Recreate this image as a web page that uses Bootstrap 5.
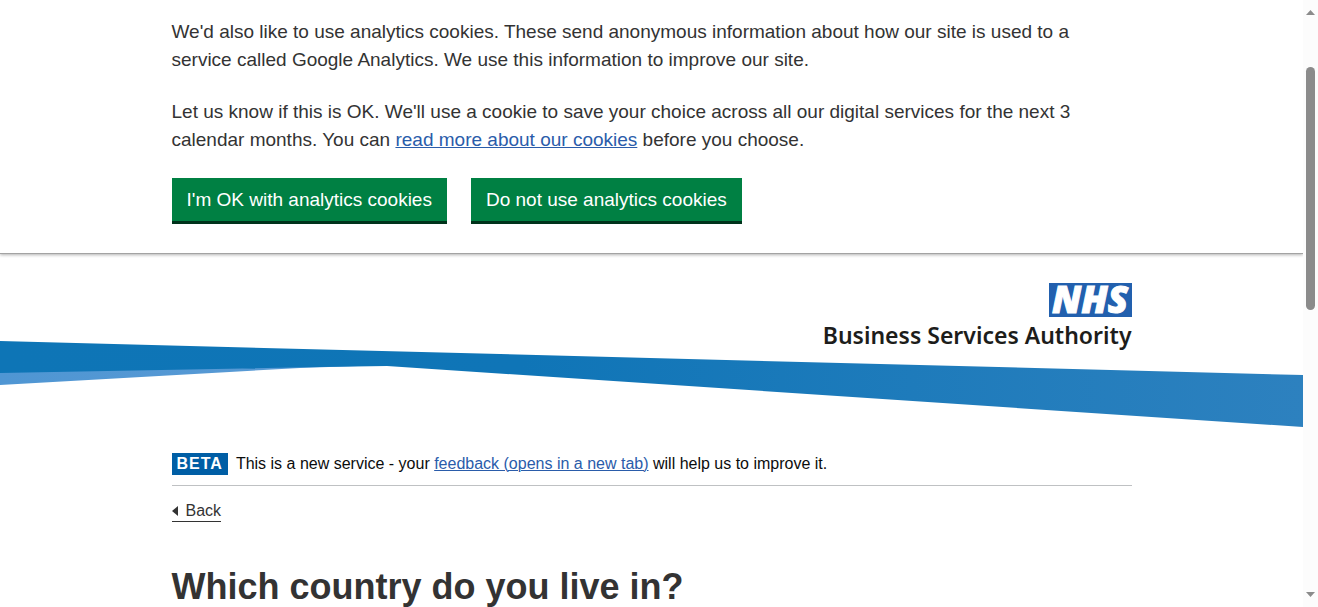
<!DOCTYPE html>
<html lang="en">
<head>
<meta charset="utf-8">
<meta name="viewport" content="width=device-width, initial-scale=1">
<title>Which country do you live in?</title>
<link href="https://cdn.jsdelivr.net/npm/bootstrap@5.3.0/dist/css/bootstrap.min.css" rel="stylesheet">
<style>
  body { font-family: "Liberation Sans", Arial, sans-serif; color: #333; background: #fff; }
  .viewport { height: 100vh; overflow: hidden; }
  .page-width { max-width: 960px; margin: 0 auto; }
  a { color: #2a5caa; text-decoration-thickness: 1px; }

  .cookie-banner { padding: 18px 0 29px; border-bottom: 1px solid #a3a3a3; box-shadow: 0 1px 3px rgba(0,0,0,.3); font-size: 19px; line-height: 28px; }
  .cookie-copy { padding-right: 24px; }
  .cookie-copy p { margin-bottom: 24px; }
  .btn-cookie { --bs-btn-color: #fff; --bs-btn-bg: #008043; --bs-btn-hover-color: #fff; --bs-btn-hover-bg: #00693a; --bs-btn-active-bg: #00693a; --bs-btn-active-color: #fff;
    font-size: 19px; line-height: 27px; padding: 8px 15px; border: 0; border-radius: 0; border-bottom: 3px solid #00331b; }

  .brand-row { padding-top: 29px; }
  .nhs-mark { width: 83px; height: 34px; }
  .brand-name { font: 600 23px/36px "Noto Sans", "Open Sans", sans-serif; color: #1d1d1b; }
  .ribbon { height: 88px; margin-top: -13px; }

  .phase-banner { margin-top: 25px; padding-bottom: 10px; border-bottom: 1px solid #bfc1c3; font-size: 16px; line-height: 22px; color: #0b0c0c; }
  .phase-tag { background: #005ea5; color: #fff; font-weight: 700; letter-spacing: 1px; padding: 0 5px; }
  .back-link { margin-top: 14px; color: #333; font-size: 16px; line-height: 21px; border-bottom: 1px solid #333; }
  h1 { margin: 39px 0 0; font-size: 36px; line-height: 50px; font-weight: 700; }

  .scroll-rail { width: 15px; background: #fcfcfc; padding: 10px 0; }
  .scroll-thumb { width: 9px; height: 243px; margin-top: 52px; border-radius: 5px; background: #8b8b8b; }
</style>
</head>
<body>
<div class="viewport d-flex">
  <div class="flex-grow-1 overflow-hidden">
    <section class="cookie-banner" aria-label="Cookies">
      <div class="page-width">
        <div class="cookie-copy">
          <p>We'd also like to use analytics cookies. These send anonymous information about how our site is used to a service called Google Analytics. We use this information to improve our site.</p>
          <p>Let us know if this is OK. We'll use a cookie to save your choice across all our digital services for the next 3 calendar months. You can <a href="#">read more about our cookies</a> before you choose.</p>
        </div>
        <div class="d-flex flex-wrap gap-4">
          <button type="button" class="btn btn-cookie">I'm OK with analytics cookies</button>
          <button type="button" class="btn btn-cookie">Do not use analytics cookies</button>
        </div>
      </div>
    </section>

    <header>
      <div class="brand-row page-width d-flex flex-column align-items-end">
        <svg class="nhs-mark" viewBox="0 0 83 34" role="img" aria-label="NHS">
          <rect width="83" height="34" fill="#2260ae"/>
          <text x="41" y="30" text-anchor="middle" font-family="Open Sans" font-size="37" font-weight="800" font-style="italic" fill="#fff" stroke="#fff" stroke-width="1">NHS</text>
        </svg>
        <div class="brand-name">Business Services Authority</div>
      </div>
      <svg class="ribbon d-block w-100" viewBox="0 0 1303 88" preserveAspectRatio="none" aria-hidden="true">
        <defs>
          <linearGradient id="ribbonBlue">
            <stop offset="0" stop-color="#0e75b6"/>
            <stop offset=".4" stop-color="#0f75b7"/>
            <stop offset="1" stop-color="#2d81bf"/>
          </linearGradient>
          <linearGradient id="ribbonLight"><stop offset="0" stop-color="#4f96d3"/><stop offset="1" stop-color="#5b9bd5"/></linearGradient>
        </defs>
        <path fill="url(#ribbonLight)" d="M0 31 L387 25 L300 28 L0 45Z"/>
        <path fill="url(#ribbonBlue)" d="M0 1 L1303 35 V87 L387 26 L320 27 L0 33Z"/>
      </svg>
    </header>

    <main class="page-width">
      <div class="phase-banner d-flex gap-2">
        <strong class="phase-tag">BETA</strong>
        <span>This is a new service - your <a href="#">feedback (opens in a new tab)</a> will help us to improve it.</span>
      </div>
      <a href="#" class="back-link d-inline-flex align-items-center gap-2 text-decoration-none">
        <svg width="6" height="10" viewBox="0 0 6 10" aria-hidden="true"><path fill="#333" d="M6 0v10L0 5z"/></svg>
        Back
      </a>
      <h1>Which country do you live in?</h1>
    </main>
  </div>

  <div class="scroll-rail flex-shrink-0 d-flex flex-column align-items-center" aria-hidden="true">
    <svg width="9" height="5" viewBox="0 0 9 5"><path fill="#8b8b8b" d="M4.500 0 9 5H0z"/></svg>
    <div class="scroll-thumb"></div>
    <svg class="mt-auto" width="9" height="5" viewBox="0 0 9 5"><path fill="#8b8b8b" d="M0 0h9L4.500 5z"/></svg>
  </div>
</div>
<script src="https://cdn.jsdelivr.net/npm/bootstrap@5.3.0/dist/js/bootstrap.bundle.min.js"></script>
</body>
</html>
